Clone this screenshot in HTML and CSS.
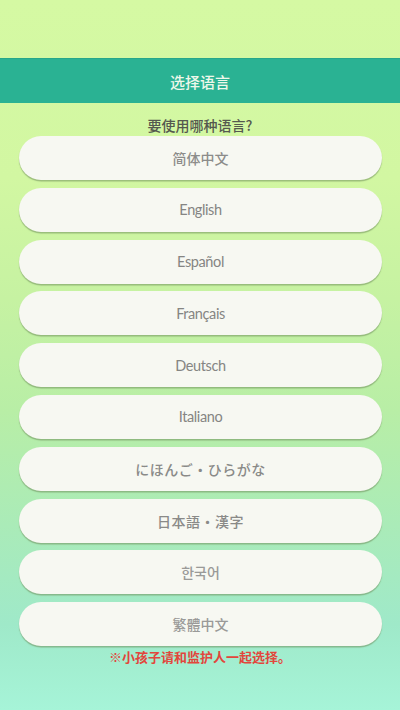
FILE: index.html
```html
<!DOCTYPE html>
<html lang="zh">
<head>
<meta charset="utf-8">
<title>选择语言</title>
<link rel="stylesheet" href="styles.css">
</head>
<body>
<div class="screen">
  <div class="top-space"></div>
  <header class="titlebar">选择语言</header>
  <p class="question">要使用哪种语言?</p>
  <ul class="langs">
    <li class="lang cjk">简体中文</li>
    <li class="lang">English</li>
    <li class="lang">Español</li>
    <li class="lang">Français</li>
    <li class="lang">Deutsch</li>
    <li class="lang">Italiano</li>
    <li class="lang jp">にほんご・ひらがな</li>
    <li class="lang jp">日本語・漢字</li>
    <li class="lang kr">한국어</li>
    <li class="lang tc">繁體中文</li>
  </ul>
  <p class="notice">※小孩子请和监护人一起选择。</p>
</div>
</body>
</html>
```

FILE: styles.css
```css
html, body {
  margin: 0;
  padding: 0;
}
body {
  width: 400px;
  height: 710px;
  overflow: hidden;
  font-family: Lato, "Noto Sans CJK SC", sans-serif;
}
.screen {
  height: 710px;
  display: flex;
  flex-direction: column;
  background: linear-gradient(180deg,
    #d5f9a3 0%,
    #d2f7a2 25%,
    #c6f2a2 42%,
    #b8eea6 58%,
    #aaebb8 74%,
    #9fe9c9 88%,
    #a6f4d8 100%);
}
.top-space {
  height: 58px;
  flex: none;
}
.titlebar {
  height: 45px;
  flex: none;
  display: flex;
  align-items: center;
  justify-content: center;
  background: #2ab293;
  border-top: 1px solid #26a78a;
  box-sizing: border-box;
  color: #eef8ea;
  font-family: "Noto Sans CJK SC", sans-serif;
  font-size: 15px;
  font-weight: 500;
}
.question {
  margin: 12px 0 1px;
  height: 20px;
  line-height: 20px;
  text-align: center;
  color: #55584f;
  font-family: "Noto Sans CJK SC", sans-serif;
  font-size: 14px;
  font-weight: 500;
}
.langs {
  list-style: none;
  margin: 0 18px 0 19px;
  padding: 0;
  display: flex;
  flex-direction: column;
  gap: 7.8px;
}
.lang {
  height: 44px;
  border-radius: 22px;
  background: #f7f8f2;
  box-shadow: 0 1.5px 1px rgba(110, 140, 90, 0.55);
  display: flex;
  align-items: center;
  justify-content: center;
  color: #858583;
  font-size: 14.5px;
  font-weight: 400;
  letter-spacing: -0.4px;
}
.lang.cjk, .lang.tc {
  font-family: "Noto Sans CJK SC", sans-serif;
  font-size: 14px;
  font-weight: 500;
  letter-spacing: 0;
  color: #8c8c8a;
}
.lang.tc {
  font-family: "Noto Sans CJK TC", sans-serif;
  color: #9a9a98;
}
.lang.jp {
  font-family: "Noto Sans CJK JP", sans-serif;
  font-size: 14px;
  font-weight: 500;
  letter-spacing: 0.5px;
  color: #8a8a88;
}
.lang.kr {
  font-family: "Noto Sans CJK KR", sans-serif;
  font-size: 14px;
  font-weight: 500;
  letter-spacing: 0;
  color: #9a9a98;
}
.notice {
  margin: 1px 0 0;
  height: 20px;
  line-height: 20px;
  text-align: center;
  color: #e2463c;
  font-family: "Noto Sans CJK SC", sans-serif;
  font-size: 13px;
  font-weight: 700;
}
```
